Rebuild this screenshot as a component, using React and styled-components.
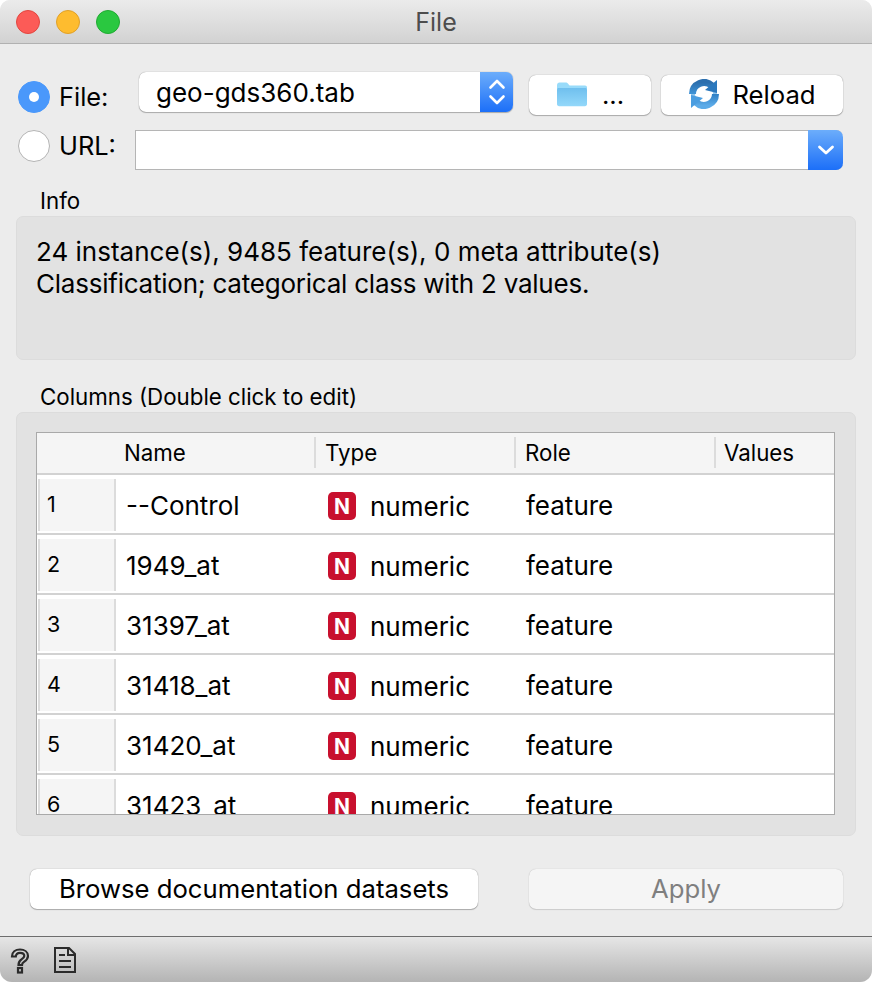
import styled, { createGlobalStyle } from 'styled-components';

const GlobalStyle = createGlobalStyle`
    html, body {
        margin: 0;
        padding: 0;
        background: #fff;
    }
    body {
        font-family: Inter, "Liberation Sans", sans-serif;
        color: #000;
    }
`;

const Window = styled.div`
    width: 872px;
    height: 982px;
    display: flex;
    flex-direction: column;
    background: #ececec;
    border-radius: 10px 10px 12px 12px;
    overflow: hidden;
`;

const TitleBar = styled.header`
    height: 43px;
    flex: none;
    position: relative;
    display: flex;
    align-items: center;
    justify-content: center;
    background: linear-gradient(#ebebeb, #d2d2d2);
    border-bottom: 1px solid #b1b1b1;
    color: #4d4d4d;
    font-size: 25px;
`;

const Lights = styled.div`
    position: absolute;
    left: 16px;
    top: 10px;
    display: flex;
    gap: 16px;
`;

const Light = styled.span`
    width: 24px;
    height: 24px;
    box-sizing: border-box;
    border-radius: 50%;
    background: ${p => p.$color};
    border: 1px solid ${p => p.$edge};
`;

const Body = styled.main`
    flex: 1;
    display: flex;
    flex-direction: column;
    padding: 28px 16px 0;
`;

const SourceGrid = styled.div`
    display: flex;
    flex-direction: column;
    gap: 18px;
    padding-left: 2px;
`;

const SourceRow = styled.div`
    display: flex;
    align-items: flex-start;
    height: 40px;
`;

const Radio = styled.span`
    width: 32px;
    height: 32px;
    flex: none;
    box-sizing: border-box;
    border-radius: 50%;
    display: flex;
    align-items: center;
    justify-content: center;
    background: ${p => (p.$on ? '#4a98fb' : '#fff')};
    border: 1px solid ${p => (p.$on ? '#4a98fb' : '#b4b4b4')};
    margin-top: ${p => p.$top || 0}px;
    &::after {
        content: '';
        display: ${p => (p.$on ? 'block' : 'none')};
        width: 10px;
        height: 10px;
        border-radius: 50%;
        background: #fff;
    }
`;

const RadioLabel = styled.span`
    font-size: 25.4px;
    line-height: 32px;
    margin-left: 9px;
    width: ${p => p.$width}px;
    flex: none;
    margin-top: ${p => p.$top || 0}px;
`;

const Combo = styled.div`
    width: 374px;
    height: 40px;
    box-sizing: border-box;
    display: flex;
    align-items: center;
    justify-content: space-between;
    background: #fff;
    border-radius: 7px;
    box-shadow: 0 0 1px rgba(0, 0, 0, 0.45), 0 1px 1px rgba(0, 0, 0, 0.25);
    font-size: 26px;
    padding-left: 17px;
    overflow: hidden;
`;

const Stepper = styled.span`
    width: 33px;
    height: 40px;
    display: flex;
    align-items: center;
    justify-content: center;
    background: linear-gradient(#6cadfb, #1c6ff8);
`;

const Button = styled.button`
    height: 40px;
    width: ${p => p.$width}px;
    margin-left: ${p => p.$gap || 0}px;
    margin-top: ${p => p.$top || 0}px;
    box-sizing: border-box;
    display: flex;
    align-items: center;
    justify-content: center;
    gap: ${p => p.$iconGap || 0}px;
    padding: 0 0 2px;
    border: 0;
    border-radius: 7px;
    background: ${p => (p.disabled ? '#f5f5f5' : '#fff')};
    color: ${p => (p.disabled ? '#7f7f7f' : '#000')};
    box-shadow: 0 0 1px rgba(0, 0, 0, ${p => (p.disabled ? 0.25 : 0.45)}), 0 1px 1px rgba(0, 0, 0, ${p => (p.disabled ? 0.12 : 0.25)});
    font-family: inherit;
    font-size: 25.7px;
`;

const UrlInput = styled.div`
    width: 708px;
    height: 40px;
    box-sizing: border-box;
    display: flex;
    justify-content: flex-end;
    background: #fff;
    border: 1px solid #b5b5b5;
    border-right: 0;
    border-radius: 0 7px 7px 0;
`;

const UrlArrow = styled.span`
    width: 35px;
    height: 40px;
    margin-top: -1px;
    display: flex;
    align-items: center;
    justify-content: center;
    background: linear-gradient(#6cadfb, #1c6ff8);
    border-radius: 0 7px 7px 0;
`;

const GroupTitle = styled.div`
    font-size: 22.3px;
    line-height: 26px;
    padding-left: 24px;
    margin-top: ${p => p.$top}px;
    margin-bottom: 2px;
`;

const Group = styled.section`
    width: 840px;
    height: ${p => p.$height}px;
    box-sizing: border-box;
    background: #e2e2e2;
    border: 1px solid #dcdcdc;
    border-radius: 7px;
    padding: 19px;
`;

const InfoLine = styled.div`
    font-size: 26px;
    line-height: 32px;
    letter-spacing: ${p => p.$spacing || 0}px;
`;

const Table = styled.div`
    width: 799px;
    height: 383px;
    box-sizing: border-box;
    background: #fff;
    border: 1px solid #a9a9a9;
    overflow: hidden;
`;

const Columns = 'grid-template-columns: 78px 199px 200px 200px 1fr;';

const HeaderRow = styled.div`
    display: grid;
    ${Columns}
    height: 42px;
    box-sizing: border-box;
    background: #f5f5f5;
    border-bottom: 2px solid #d2d2d2;
    font-size: 22.3px;
`;

const HeaderCell = styled.div`
    display: flex;
    align-items: center;
    height: 31px;
    margin-top: 4px;
    padding-left: ${p => p.$pad}px;
    border-left: ${p => (p.$sep ? '2px solid #dcdcdc' : '0')};
`;

const DataRow = styled.div`
    display: grid;
    ${Columns}
    grid-template-rows: 58px;
    height: 60px;
    box-sizing: border-box;
    border-bottom: 2px solid #d2d2d2;
    font-size: 26px;
`;

const RowNumber = styled.div`
    height: 52px;
    margin: 4px -1px 0 1px;
    box-sizing: border-box;
    padding: 12px 0 0 7px;
    background: #f5f5f5;
    border-left: 2px solid #dcdcdc;
    border-right: 2px solid #dcdcdc;
    font-size: 21.5px;
`;

const NameCell = styled.div`
    padding-left: 11px;
    line-height: 62px;
`;

const TypeCell = styled.div`
    display: flex;
    align-items: center;
    gap: 14px;
    padding: 4px 0 0 14px;
`;

const TypeBadge = styled.span`
    width: 28px;
    height: 28px;
    flex: none;
    display: flex;
    align-items: center;
    justify-content: center;
    border-radius: 5px;
    background: #c8102e;
    color: #fff;
    font-size: 21px;
    font-weight: 700;
`;

const RoleCell = styled.div`
    padding-left: 12px;
    line-height: 62px;
`;

const Footer = styled.div`
    display: flex;
    padding-left: 14px;
    margin-top: 33px;
`;

const StatusBar = styled.footer`
    height: 45px;
    flex: none;
    display: flex;
    align-items: center;
    gap: 24px;
    padding-left: 10px;
    background: linear-gradient(#e6e6e6, #b4b4b4);
    border-top: 1px solid #6e6e6e;
`;

const HelpGlyph = styled.svg`
    margin-top: 3px;
`;

const rows = ['--Control', '1949_at', '31397_at', '31418_at', '31420_at', '31423_at'];

const Updown = () => (
    <svg width="20" height="30" viewBox="0 0 20 30" fill="none" stroke="#fff" strokeWidth="2.6" strokeLinecap="round" strokeLinejoin="round">
        <path d="M3.5 10.5 10 4l6.5 6.5" />
        <path d="M3.5 19.5 10 26l6.5-6.5" />
    </svg>
);

const Chevron = () => (
    <svg width="18" height="12" viewBox="0 0 18 12" fill="none" stroke="#fff" strokeWidth="2.8" strokeLinecap="round" strokeLinejoin="round">
        <path d="M2.5 3 9 9l6.5-6" />
    </svg>
);

const Folder = () => (
    <svg width="32" height="26" viewBox="0 0 32 26">
        <defs>
            <linearGradient id="folderBody" x1="0" y1="0" x2="0" y2="1">
                <stop offset="0" stopColor="#6fbfee" />
                <stop offset="1" stopColor="#93d8fa" />
            </linearGradient>
        </defs>
        <path d="M1 4.5C1 2.5 2 1.5 3.5 1.5h6c1.5 0 2.2.6 3 1.7.5.7 1 1.300 2 1.300H29c1.300 0 2 .8 2 2V8H1z" fill="#98dbfa" />
        <path d="M1 8.500c0-1 .8-1.600 1.800-1.600h26.400c1 0 1.800.6 1.800 1.600V23c0 1.400-.8 2.200-2.200 2.200H3.200C1.800 25.200 1 24.400 1 23z" fill="url(#folderBody)" />
    </svg>
);

const ReloadIcon = () => (
    <svg width="32" height="30" viewBox="0 0 32 30">
        <defs>
            <linearGradient id="reloadTop" x1="0" y1="0" x2="0" y2="1">
                <stop offset="0" stopColor="#2c6fae" />
                <stop offset="1" stopColor="#3f94d8" />
            </linearGradient>
            <linearGradient id="reloadBottom" x1="0" y1="0" x2="0" y2="1">
                <stop offset="0" stopColor="#2f7fc4" />
                <stop offset="1" stopColor="#5cabe8" />
            </linearGradient>
        </defs>
        <circle cx="16" cy="15" r="13" fill="#8fc4ec" />
        <circle cx="16" cy="15" r="9" fill="#fff" />
        <path d="M4.500 15A11.500 11.500 0 0 1 24 6.800" fill="none" stroke="url(#reloadTop)" strokeWidth="7" />
        <path d="M27.500 15A11.500 11.500 0 0 1 8 23.200" fill="none" stroke="url(#reloadBottom)" strokeWidth="7" />
        <path d="M29 1v13l-12-3z" fill="#2b78bd" />
        <path d="M3 29V16l12 3z" fill="#4a9de0" />
    </svg>
);

const HelpIcon = () => (
    <HelpGlyph width="20" height="26" viewBox="0 0 20 26" fill="none" stroke="#2b2b2b" strokeWidth="2.2">
        <path d="M2 8.500C2 4 5.500 1.500 10 1.500s8 2.500 8 6.500c0 3-2 4.500-4 5.800-1.700 1.100-2 2-2 3.200H8.500c0-2.700.8-4.200 3-5.700 1.700-1.100 2.800-2 2.800-3.300 0-2-2-3.200-4.300-3.200S6 6 5.800 8.500z" />
        <rect x="8" y="20" width="4" height="4.500" />
    </HelpGlyph>
);

const NoteIcon = () => (
    <svg width="22" height="26" viewBox="0 0 22 26" fill="none" stroke="#2b2b2b" strokeWidth="2">
        <path d="M1 1h14l6 6v18H1z" />
        <path d="M14 1v7h7" />
        <path d="M5 8h6M5 14h12M5 20h12" />
    </svg>
);

export default function App() {
    return (
        <Window>
            <GlobalStyle />
            <TitleBar>
                <Lights>
                    <Light $color="#fc5b57" $edge="#e2463f" />
                    <Light $color="#febc2f" $edge="#e0a028" />
                    <Light $color="#2ac840" $edge="#20aa32" />
                </Lights>
                File
            </TitleBar>
            <Body>
                <SourceGrid>
                    <SourceRow>
                        <Radio $on $top={9} />
                        <RadioLabel $width={80} $top={9}>File:</RadioLabel>
                        <Combo>
                            geo-gds360.tab
                            <Stepper><Updown /></Stepper>
                        </Combo>
                        <Button $width={122} $gap={16} $top={3} $iconGap={14}><Folder />...</Button>
                        <Button $width={182} $gap={10} $top={3} $iconGap={12}><ReloadIcon />Reload</Button>
                    </SourceRow>
                    <SourceRow>
                        <Radio />
                        <RadioLabel $width={76}>URL:</RadioLabel>
                        <UrlInput><UrlArrow><Chevron /></UrlArrow></UrlInput>
                    </SourceRow>
                </SourceGrid>
                <GroupTitle $top={18}>Info</GroupTitle>
                <Group $height={144}>
                    <InfoLine>24 instance(s), 9485 feature(s), 0 meta attribute(s)</InfoLine>
                    <InfoLine $spacing={-0.23}>Classification; categorical class with 2 values.</InfoLine>
                </Group>
                <GroupTitle $top={24}>Columns (Double click to edit)</GroupTitle>
                <Group $height={424}>
                    <Table>
                        <HeaderRow>
                            <HeaderCell />
                            <HeaderCell $pad={9}>Name</HeaderCell>
                            <HeaderCell $sep $pad={9}>Type</HeaderCell>
                            <HeaderCell $sep $pad={9}>Role</HeaderCell>
                            <HeaderCell $sep $pad={8}>Values</HeaderCell>
                        </HeaderRow>
                        {rows.map((name, i) => (
                            <DataRow key={name}>
                                <RowNumber>{i + 1}</RowNumber>
                                <NameCell>{name}</NameCell>
                                <TypeCell><TypeBadge>N</TypeBadge>numeric</TypeCell>
                                <RoleCell>feature</RoleCell>
                                <div />
                            </DataRow>
                        ))}
                    </Table>
                </Group>
                <Footer>
                    <Button $width={448}>Browse documentation datasets</Button>
                    <Button $width={314} $gap={51} disabled>Apply</Button>
                </Footer>
            </Body>
            <StatusBar>
                <HelpIcon />
                <NoteIcon />
            </StatusBar>
        </Window>
    );
}
